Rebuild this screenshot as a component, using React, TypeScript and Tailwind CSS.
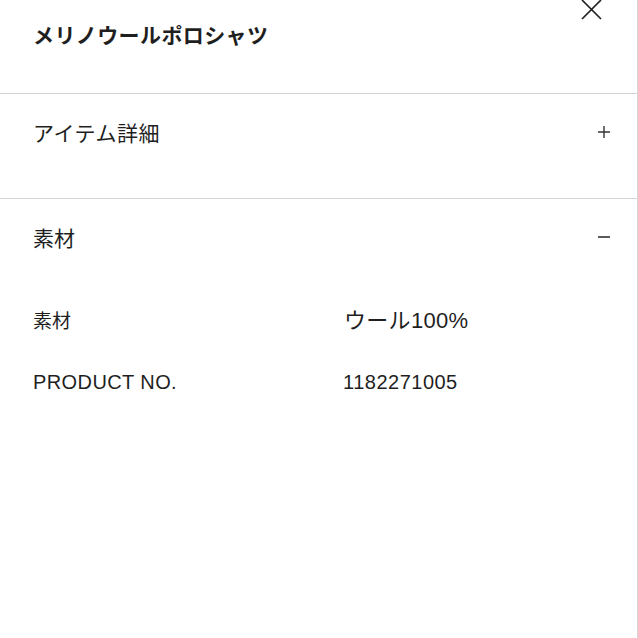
import React from "react";

const jp = { fontFamily: '"Noto Sans CJK JP", "Noto Sans", sans-serif' };
const mixed = { fontFamily: '"Liberation Sans", "Noto Sans CJK JP", sans-serif' };

function Plus() {
  return (
    <svg width="14" height="14" viewBox="0 0 14 14">
      <path d="M7 1v12M1 7h12" stroke="#333" strokeWidth="1.4" fill="none" />
    </svg>
  );
}

function Minus() {
  return (
    <svg width="14" height="14" viewBox="0 0 14 14">
      <path d="M1 7h12" stroke="#333" strokeWidth="1.6" fill="none" />
    </svg>
  );
}

export default function App() {
  return (
    <div className="relative w-[638px] h-[638px] bg-white border-r border-[#d6d6d6] text-[#1f1f1f]">
      <button className="absolute left-[580px] top-[0px] w-[22px] h-[21px]" aria-label="close">
        <svg width="22" height="21" viewBox="0 0 22 21">
          <path d="M2 0L21 19M21 0L2 19" stroke="#222" strokeWidth="1.7" fill="none" />
        </svg>
      </button>

      <div className="h-[94px] border-b border-[#d4d4d4] pl-[33px] pt-[18px]">
        <h1 className="text-[21px] leading-[32px] font-bold tracking-[0.4px]" style={jp}>
          メリノウールポロシャツ
        </h1>
      </div>

      <div className="h-[105px] border-b border-[#d4d4d4] pl-[33px] pr-[26px] pt-[22px]">
        <div className="flex items-center justify-between h-[32px]">
          <span className="text-[21px] leading-[32px] tracking-[0.5px]" style={jp}>アイテム詳細</span>
          <Plus />
        </div>
      </div>

      <div className="pl-[33px] pr-[26px] pt-[22px]">
        <div className="flex items-center justify-between h-[32px]">
          <span className="text-[21px] leading-[32px]" style={jp}>素材</span>
          <Minus />
        </div>

        <div className="mt-[52px] flex items-baseline">
          <span className="w-[311px] text-[19px] leading-[30px]" style={jp}>素材</span>
          <span className="text-[22px] leading-[32px] tracking-[0.3px]" style={mixed}>ウール100%</span>
        </div>

        <div className="mt-[30px] flex items-baseline">
          <span className="w-[310px] text-[20px] leading-[30px] tracking-[0.4px]" style={mixed}>PRODUCT NO.</span>
          <span className="text-[20px] leading-[30px] tracking-[0.5px]" style={mixed}>1182271005</span>
        </div>
      </div>
    </div>
  );
}
